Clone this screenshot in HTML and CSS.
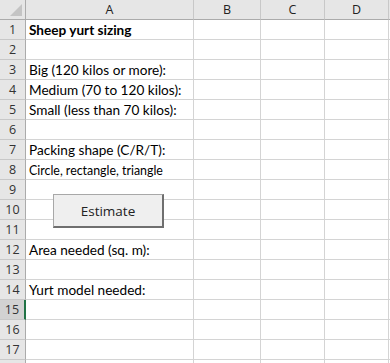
FILE: index.html
```html
<!DOCTYPE html>
<html lang="en">
<head>
    <meta charset="UTF-8">
    <title>Sheep yurt sizing</title>
    <link rel="stylesheet" href="styles.css">
</head>
<body>
    <div class="sheet">
        <div class="grid">
            <div class="corner"><span class="tri"></span></div>
            <div class="colhead">A</div>
            <div class="colhead">B</div>
            <div class="colhead">C</div>
            <div class="colhead">D</div>
            <div class="colhead last"></div>

            <div class="rowhead">1</div><div class="cell bold">Sheep yurt sizing</div><div class="cell"></div><div class="cell"></div><div class="cell"></div><div class="cell last"></div>
            <div class="rowhead">2</div><div class="cell"></div><div class="cell"></div><div class="cell"></div><div class="cell"></div><div class="cell last"></div>
            <div class="rowhead">3</div><div class="cell">Big (120 kilos or more):</div><div class="cell"></div><div class="cell"></div><div class="cell"></div><div class="cell last"></div>
            <div class="rowhead">4</div><div class="cell">Medium (70 to 120 kilos):</div><div class="cell"></div><div class="cell"></div><div class="cell"></div><div class="cell last"></div>
            <div class="rowhead">5</div><div class="cell">Small (less than 70 kilos):</div><div class="cell"></div><div class="cell"></div><div class="cell"></div><div class="cell last"></div>
            <div class="rowhead">6</div><div class="cell"></div><div class="cell"></div><div class="cell"></div><div class="cell"></div><div class="cell last"></div>
            <div class="rowhead">7</div><div class="cell">Packing shape (C/R/T):</div><div class="cell"></div><div class="cell"></div><div class="cell"></div><div class="cell last"></div>
            <div class="rowhead">8</div><div class="cell small">Circle, rectangle, triangle</div><div class="cell"></div><div class="cell"></div><div class="cell"></div><div class="cell last"></div>
            <div class="rowhead">9</div><div class="cell"></div><div class="cell"></div><div class="cell"></div><div class="cell"></div><div class="cell last"></div>
            <div class="rowhead">10</div><div class="cell"></div><div class="cell"></div><div class="cell"></div><div class="cell"></div><div class="cell last"></div>
            <div class="rowhead">11</div><div class="cell"></div><div class="cell"></div><div class="cell"></div><div class="cell"></div><div class="cell last"></div>
            <div class="rowhead">12</div><div class="cell">Area needed (sq. m):</div><div class="cell"></div><div class="cell"></div><div class="cell"></div><div class="cell last"></div>
            <div class="rowhead">13</div><div class="cell"></div><div class="cell"></div><div class="cell"></div><div class="cell"></div><div class="cell last"></div>
            <div class="rowhead">14</div><div class="cell">Yurt model needed:</div><div class="cell"></div><div class="cell"></div><div class="cell"></div><div class="cell last"></div>
            <div class="rowhead active">15</div><div class="cell selected"></div><div class="cell"></div><div class="cell"></div><div class="cell"></div><div class="cell last"></div>
            <div class="rowhead">16</div><div class="cell"></div><div class="cell"></div><div class="cell"></div><div class="cell"></div><div class="cell last"></div>
            <div class="rowhead">17</div><div class="cell"></div><div class="cell"></div><div class="cell"></div><div class="cell"></div><div class="cell last"></div>
            <div class="rowhead"></div><div class="cell"></div><div class="cell"></div><div class="cell"></div><div class="cell"></div><div class="cell last"></div>
        </div>
        <button class="estimate">Estimate</button>
    </div>
</body>
</html>
```

FILE: styles.css
```css
/* spreadsheet look */
body {
    margin: 0;
    background-color: #ffffff;
    font-family: Lato, "Open Sans", sans-serif;
    overflow: hidden;
}
.sheet {
    position: relative;
    width: 390px;
    height: 363px;
    overflow: hidden;
}
.grid {
    display: grid;
    grid-template-columns: 26px 168px 67px 64px 64px 1fr;
    grid-auto-rows: 20px;
}
.grid > div {
    box-sizing: border-box;
    border-right: 1px solid #d4d4d4;
    border-bottom: 1px solid #d4d4d4;
}
.corner {
    position: relative;
    background-color: #e6e6e6;
    border-bottom-color: #ababab !important;
    border-right-color: #ababab !important;
}
.corner .tri {
    position: absolute;
    right: 3px;
    bottom: 3px;
    width: 0;
    height: 0;
    border-left: 12px solid transparent;
    border-bottom: 12px solid #c4c4c4;
}
.colhead {
    background-color: #e6e6e6;
    border-bottom-color: #ababab !important;
    border-right-color: #c8c8c8 !important;
    color: #222;
    font-family: "Open Sans", sans-serif;
    font-size: 12.5px;
    text-align: center;
    line-height: 19px;
}
.rowhead {
    background-color: #e6e6e6;
    border-right-color: #ababab !important;
    border-bottom-color: #c8c8c8 !important;
    color: #333;
    font-family: "Open Sans", sans-serif;
    font-size: 12.5px;
    text-align: center;
    line-height: 19px;
}
.rowhead.active {
    background-color: #d2d2d2;
    border-right: 2px solid #217346 !important;
}
.cell {
    font-size: 13.6px;
    color: #000;
    white-space: nowrap;
    padding-left: 3px;
    line-height: 20px;
}
.cell.bold {
    font-weight: bold;
}
.cell.small {
    font-size: 12.4px;
    line-height: 21px;
}
.last {
    border-right: none !important;
}
.estimate {
    position: absolute;
    left: 53px;
    top: 194px;
    width: 111px;
    height: 34px;
    background-color: #efefef;
    border: 1px solid #a8a8a8;
    border-right: 2px solid #6f6f6f;
    border-bottom: 2px solid #6f6f6f;
    font-family: "Open Sans", sans-serif;
    font-size: 13.5px;
    color: #222;
    padding: 0;
}
```
